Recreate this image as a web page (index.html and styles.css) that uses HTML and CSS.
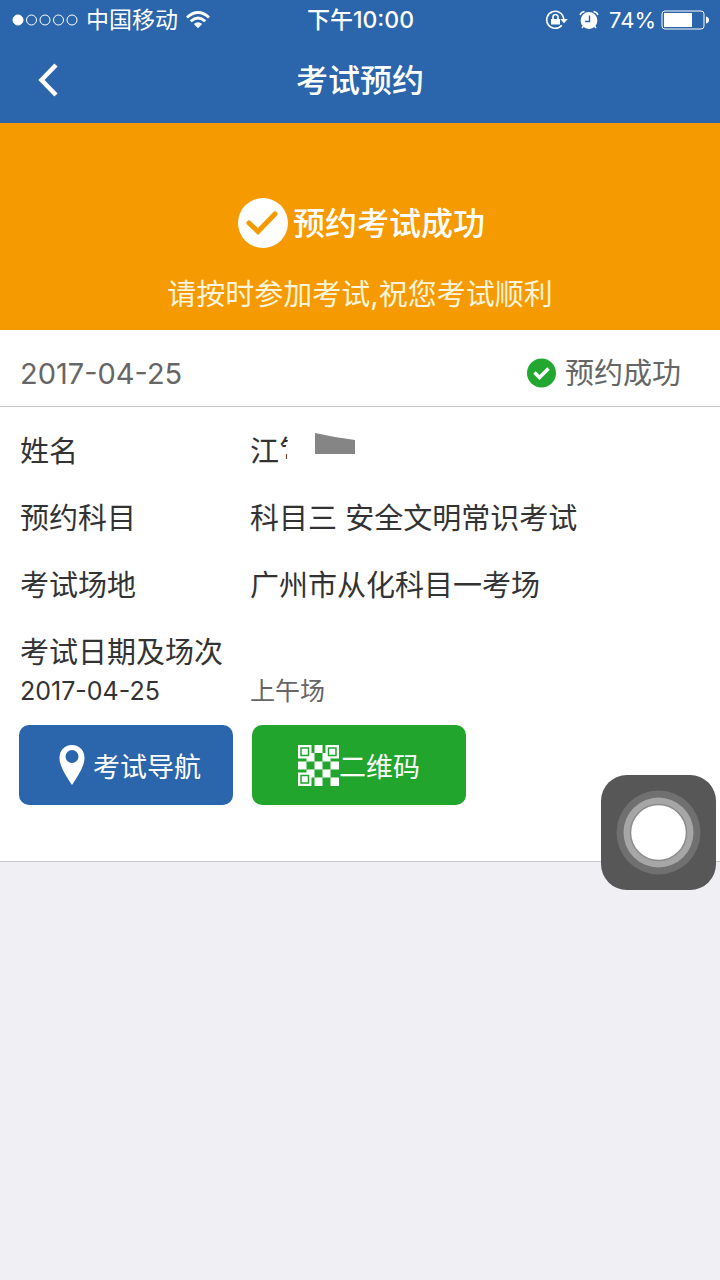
FILE: index.html
```html
<!DOCTYPE html>
<html lang="zh-CN">
<head>
<meta charset="utf-8">
<meta name="viewport" content="width=device-width, initial-scale=1">
<title>考试预约</title>
<link rel="stylesheet" href="styles.css">
</head>
<body>
<header class="header">
  <div class="status">
    <div class="status-left">
      <svg class="signal" width="66" height="12" viewBox="0 0 66 12" fill="none" stroke="#fff" stroke-width="1">
        <circle cx="6" cy="6" r="5" fill="#fff"/><circle cx="19.500" cy="6" r="5"/><circle cx="33" cy="6" r="5"/><circle cx="46.500" cy="6" r="5"/><circle cx="60" cy="6" r="5"/>
      </svg>
      <span>中国移动</span>
      <svg width="24" height="18" viewBox="0 0 24 18" fill="none" stroke="#fff" stroke-width="2.800">
        <path d="M1 6.500Q12-3.500 23 6.500M4.700 10.300Q12 3.700 19.300 10.300"/><path d="M7.800 13Q12 9.300 16.200 13L12 17.300Z" fill="#fff" stroke="none"/>
      </svg>
    </div>
    <time class="clock">下午10:00</time>
    <div class="status-right">
      <svg width="24" height="20" viewBox="0 0 24 20" fill="none" stroke="#fff" stroke-width="1.600">
        <path d="M16.800 15.200A8.500 8.500 0 1 1 18.700 9"/><path d="M15.200 9h7.600L19 13.200Z" fill="#fff" stroke="none"/><path d="M6 9h9v5.500H6Z" fill="#fff" stroke="none"/><path d="M8 9V7a2.500 2.500 0 0 1 5 0v2"/>
      </svg>
      <svg class="alarm" width="20" height="20" viewBox="0 0 20 20" fill="none" stroke="#fff" stroke-width="1.400">
        <circle cx="10" cy="10.500" r="7.700" fill="#fff"/><path d="M1 5Q2 2 5.500 1.500M19 5Q18 2 14.500 1.500M4.500 16 3 18M15.500 16l1.500 2"/><path d="M10.500 5.500v6H6" stroke="#2b65ab"/>
      </svg>
      <span>74%</span>
      <svg width="48" height="20" viewBox="0 0 48 20" fill="none" stroke="#fff">
        <rect x="1" y="1" width="42" height="18" rx="3"/><path d="M3 3h28v14H3Z" fill="#fff" stroke="none"/><path d="M45 6.500q3 1 3 3.500t-3 3.500Z" fill="#fff" stroke="none"/>
      </svg>
    </div>
  </div>
  <nav class="nav">
    <button class="back" type="button" aria-label="返回">
      <svg width="20" height="34" viewBox="0 0 20 34" fill="none" stroke="#fff" stroke-width="4.500"><path d="M18 2 3.500 17 18 32"/></svg>
    </button>
    <h1 class="title">考试预约</h1>
  </nav>
</header>
<main>
  <section class="banner">
    <h2 class="banner-title">
      <svg width="50" height="50" viewBox="0 0 50 50"><circle cx="25" cy="25" r="25" fill="#fff"/><path d="M11 25 20 33.500 37 16" fill="none" stroke="#f59a00" stroke-width="5" stroke-linecap="round"/></svg>
      <span>预约考试成功</span>
    </h2>
    <p class="banner-text">请按时参加考试,祝您考试顺利</p>
  </section>
  <section class="card">
    <div class="card-head">
      <time>2017-04-25</time>
      <span class="state">
        <svg width="29" height="30" viewBox="0 0 29 30"><circle cx="14.500" cy="15" r="14.500" fill="#22a830"/><path d="M7.500 14.500 12.500 19.500 21.500 10.500" fill="none" stroke="#fff" stroke-width="3.500"/></svg>
        <span>预约成功</span>
      </span>
    </div>
    <dl class="details">
      <dt>姓名</dt>
      <dd class="name"><span>江钅</span><svg class="patch" width="78" height="36" viewBox="0 0 78 36"><path d="M10 0H78V36H0V31H7V27H10V22H3V17H8L11 8Z" fill="#fff"/><path d="M38 1 58 5 78 8V22H38Z" fill="#858585"/></svg></dd>
      <dt>预约科目</dt>
      <dd>科目三 安全文明常识考试</dd>
      <dt>考试场地</dt>
      <dd>广州市从化科目一考场</dd>
    </dl>
    <div class="session">
      <h3 class="session-title">考试日期及场次</h3>
      <time>2017-04-25</time>
      <span class="session-part">上午场</span>
    </div>
    <div class="actions">
      <button class="action" type="button">
        <svg class="pin" width="26" height="42" viewBox="0 0 26 42"><path fill="#fff" fill-rule="evenodd" d="M13 1C5.500 1 .5 6.500 .5 14C.5 22 7 32 13 41C19 32 25.500 22 25.500 14C25.500 6.500 20.500 1 13 1ZM13 6a6.500 6.500 0 1 1 0 13a6.500 6.500 0 0 1 0-13Z"/></svg>
        <span>考试导航</span>
      </button>
      <button class="action green" type="button">
        <svg width="41" height="41" viewBox="0 0 41 41">
          <path fill="#fff" d="M0 0h13.500v13.500H0ZM27.500 0H41v13.500H27.500ZM0 27.500h13.500V41H0ZM16.500 0h8v8h-8ZM8.500 8h8v8.500h-8ZM24.500 8h8v8.500h-8ZM0 16.500h8.500v8H0ZM16.500 16.500h8v8h-8ZM32.500 16.500H41v8h-8.500ZM8.500 24.500h8v8h-8ZM24.500 24.500h8v8h-8ZM16.500 32.500h8V41h-8ZM32.500 32.500H41V41h-8.500Z"/>
          <path fill="none" stroke="#22a52c" stroke-width="1.500" d="M3 3h7.500v7.500H3ZM30.500 3H38v7.500h-7.500ZM3 30.500h7.500V38H3Z"/>
        </svg>
        <span>二维码</span>
      </button>
    </div>
  </section>
</main>
<button class="assist" type="button" aria-label="辅助触控">
  <svg width="115" height="115" viewBox="0 0 115 115"><circle cx="57.500" cy="57.500" r="42" fill="#707070"/><circle cx="57.500" cy="57.500" r="35" fill="#a6a6a6"/><circle cx="57.500" cy="57.500" r="28" fill="#fff" stroke="#8c8c8c" stroke-width="1.500"/></svg>
</button>
</body>
</html>
```
FILE: styles.css
```css
* { box-sizing: border-box; }
body {
  margin: 0;
  min-height: 100vh;
  background: #efeff4;
  color: #333;
  font: 29px/39px Inter, "Noto Sans CJK SC", sans-serif;
}
h1, h2, h3, p, dl, dd { margin: 0; font-weight: 400; }
button { border: 0; padding: 0; color: #fff; font-family: inherit; }
svg { display: block; flex: none; }
.header { background: #2b65ab; color: #fff; }
.status {
  display: grid;
  grid-template-columns: 1fr auto 1fr;
  align-items: center;
  height: 40px;
  padding: 0 11px 0 12px;
  font-size: 23px;
}
.status-left, .status-right { display: flex; align-items: center; gap: 8px; }
.status-right { justify-content: flex-end; gap: 5px; font-size: 22px; }
.alarm { margin: 0 5px; }
.clock { font-weight: 500; }
.nav {
  display: grid;
  grid-template-columns: 1fr auto 1fr;
  align-items: center;
  height: 83px;
  padding: 0 38px 3px;
}
.back { justify-self: start; background: none; }
.title { font-size: 32px; font-weight: 500; }
.banner {
  padding: 75px 20px 16px;
  background: #f59a00;
  color: #fff;
  text-align: center;
}
.banner-title {
  display: flex;
  justify-content: center;
  align-items: center;
  gap: 5px;
  padding-left: 3px;
  font-size: 32px;
  font-weight: 500;
}
.banner-text { margin-top: 27px; color: #fff4dc; }
.card { padding-bottom: 56px; background: #fff; border-bottom: 1px solid #c8c7cc; }
.card-head {
  display: flex;
  justify-content: space-between;
  align-items: center;
  height: 77px;
  padding: 10px 39px 0 20px;
  border-bottom: 1px solid #c8c7cc;
  color: #666;
}
.state { display: flex; align-items: center; gap: 9px; }
.details {
  display: grid;
  grid-template-columns: 230px 1fr;
  row-gap: 28px;
  padding: 25px 20px 28px;
}
.name { display: flex; align-items: flex-start; }
.patch { margin-left: -31px; }
.session {
  display: grid;
  grid-template-columns: 230px 1fr;
  padding: 0 20px;
  font-size: 25px;
}
.session-title { grid-column: 1 / -1; font-size: 29px; }
.session-part { color: #666; }
.actions { display: flex; gap: 19px; padding: 14px 19px 0; }
.action {
  display: flex;
  justify-content: center;
  align-items: center;
  width: 214px;
  height: 80px;
  border-radius: 10px;
  background: #2b65ab;
  font-size: 27px;
}
.pin { margin: 0 8px; }
.green { background: #22a52c; }
.assist {
  position: fixed;
  top: 775px;
  right: 4px;
  border-radius: 26px;
  background: #575757;
}
```
